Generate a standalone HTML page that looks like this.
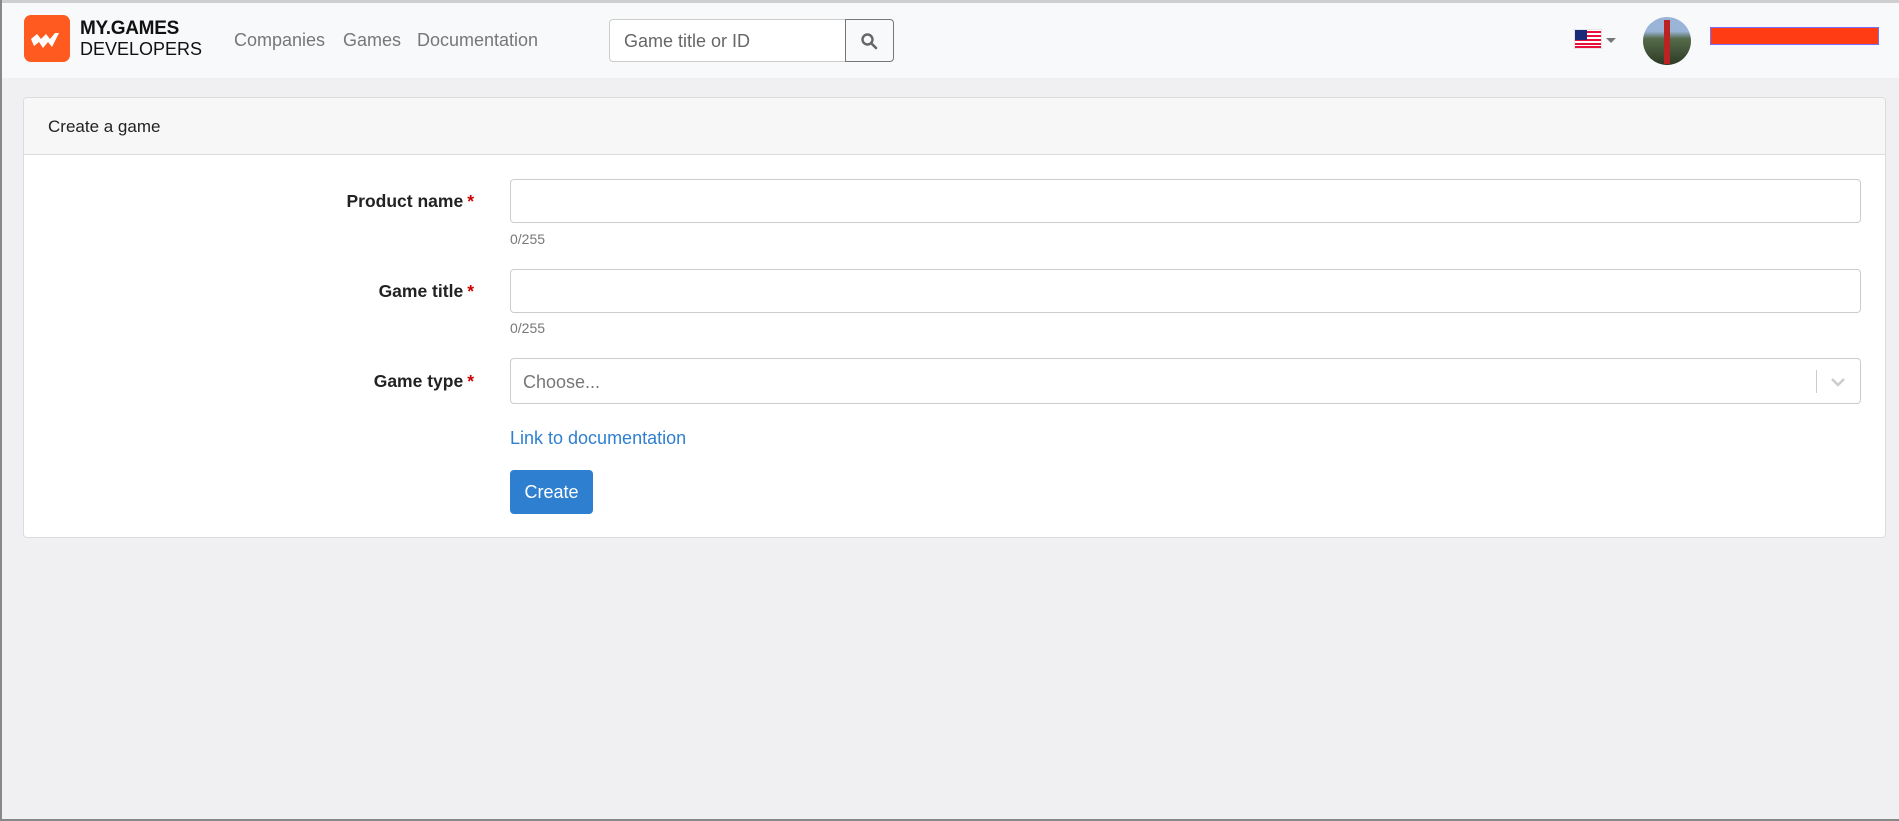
<!DOCTYPE html>
<html><head><meta charset="utf-8"><style>
*{box-sizing:border-box;margin:0;padding:0}
body{width:1899px;height:821px;overflow:hidden;background:#f0f0f2;font-family:"Liberation Sans",sans-serif;position:relative}
.a{position:absolute}
.top{left:0;top:0;width:1899px;height:3px;background:#cfcfcf}
.nav{left:0;top:3px;width:1899px;height:75px;background:#f8f9fb}
.nl{font-size:18px;color:#777;top:30px}
.inp{border:1px solid #ccc;border-radius:4px;background:#fff}
.lbl{font-weight:bold;font-size:17.5px;color:#222;right:1425px;text-align:right}
.lbl b{color:#c00;margin-left:4px}
.cnt{font-size:14px;color:#777;left:510px}
</style></head><body>
<div class="a top"></div>
<div class="a nav"></div>
<div class="a" style="left:0;top:0;width:2px;height:821px;background:#888"></div>
<div class="a" style="left:0;top:819px;width:1899px;height:2px;background:#888"></div>
<div class="a" style="left:24px;top:15px;width:46px;height:47px;background:#ff5a1f;border-radius:7px"></div>
<svg class="a" style="left:27px;top:25px" width="40" height="28" viewBox="0 0 40 28"><path d="M4 14l6-5 4 5 5-5 4 5 5-6 4 0-7 14-4-5-5 6-4-6-5 4z" fill="#fff"/></svg>
<div class="a" style="left:80px;top:18px;font-size:19px;font-weight:bold;color:#111;letter-spacing:-0.3px">MY.GAMES</div>
<div class="a" style="left:80px;top:39px;font-size:18px;color:#111">DEVELOPERS</div>
<div class="a nl" style="left:234px">Companies</div>
<div class="a nl" style="left:343px">Games</div>
<div class="a nl" style="left:417px">Documentation</div>
<div class="a inp" style="left:609px;top:19px;width:240px;height:43px;border-radius:4px 0 0 4px"></div>
<div class="a" style="left:624px;top:31px;font-size:18px;color:#666">Game title or ID</div>
<div class="a" style="left:845px;top:19px;width:49px;height:43px;border:1px solid #777;border-radius:0 4px 4px 0;background:#f8f9fb"></div>
<svg class="a" style="left:860px;top:32px" width="18" height="18" viewBox="0 0 18 18"><circle cx="7.5" cy="7.5" r="5" fill="none" stroke="#666" stroke-width="2.4"/><path d="M11 11l5 5" stroke="#666" stroke-width="2.6" stroke-linecap="round"/></svg>
<svg class="a" style="left:1574px;top:29px" width="28" height="20" viewBox="0 0 28 20"><rect width="28" height="20" fill="#fff" stroke="#ccc"/><g fill="#e8103a"><rect x="1" y="2" width="26" height="2"/><rect x="1" y="6" width="26" height="2"/><rect x="1" y="10" width="26" height="2"/><rect x="1" y="14" width="26" height="2"/><rect x="1" y="17" width="26" height="2"/></g><rect x="1" y="1" width="12" height="10" fill="#1c2a7a"/></svg>
<div class="a" style="left:1606px;top:38px;border-left:5px solid transparent;border-right:5px solid transparent;border-top:5px solid #777"></div>
<div class="a" style="left:1643px;top:17px;width:48px;height:48px;border-radius:50%;background:linear-gradient(#9ab4d8 0 30%,#556b4a 45%,#2d3a26)"></div>
<div class="a" style="left:1664px;top:20px;width:6px;height:44px;background:#b22"></div>
<div class="a" style="left:1710px;top:27px;width:169px;height:18px;background:#ff3c14;border:1px solid #7070ff"></div>
<div class="a" style="left:23px;top:97px;width:1863px;height:441px;background:#fff;border:1px solid #dcdcdc;border-radius:4px;overflow:hidden">
<div style="height:57px;background:#f7f7f7;border-bottom:1px solid #dcdcdc;padding:19px 0 0 24px;font-size:17px;color:#222">Create a game</div></div>
<div class="a lbl" style="top:191px">Product name<b>*</b></div>
<div class="a inp" style="left:510px;top:179px;width:1351px;height:44px"></div>
<div class="a cnt" style="top:231px">0/255</div>
<div class="a lbl" style="top:281px">Game title<b>*</b></div>
<div class="a inp" style="left:510px;top:269px;width:1351px;height:44px"></div>
<div class="a cnt" style="top:320px">0/255</div>
<div class="a lbl" style="top:371px">Game type<b>*</b></div>
<div class="a inp" style="left:510px;top:358px;width:1351px;height:46px"></div>
<div class="a" style="left:523px;top:372px;font-size:18px;color:#777">Choose...</div>
<div class="a" style="left:1816px;top:370px;width:1px;height:23px;background:#ccc"></div>
<svg class="a" style="left:1830px;top:377px" width="16" height="10" viewBox="0 0 16 10"><path d="M2 2l6 6 6-6" fill="none" stroke="#ccc" stroke-width="2.5"/></svg>
<div class="a" style="left:510px;top:428px;font-size:18px;color:#2f7fd0">Link to documentation</div>
<div class="a" style="left:510px;top:470px;width:83px;height:44px;background:#2f7fd0;border-radius:4px;color:#fff;font-size:18px;text-align:center;line-height:44px">Create</div>
</body></html>
